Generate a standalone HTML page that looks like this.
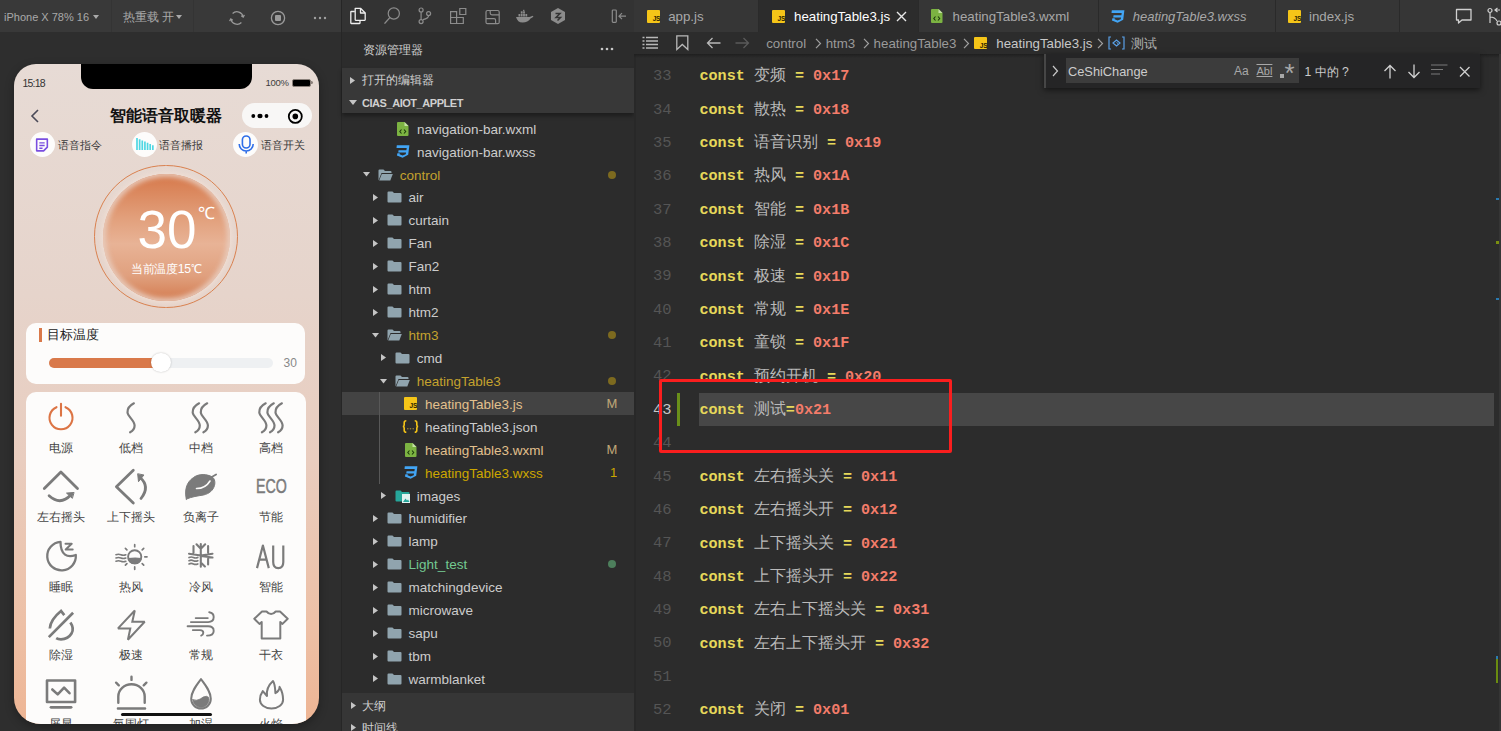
<!DOCTYPE html>
<html><head><meta charset="utf-8">
<style>
*{box-sizing:border-box;margin:0;padding:0}
html,body{width:1501px;height:731px;overflow:hidden;background:#2c2c2c;font-family:"Liberation Sans",sans-serif}
.a{position:absolute}
.t{position:absolute;white-space:nowrap;height:20px;line-height:20px}
svg{position:absolute;overflow:visible}
</style></head><body>
<!-- ===== LEFT SIMULATOR ===== -->
<div class="a" style="left:0;top:0;width:341px;height:731px;background:#2e2e2e"></div>
<div class="a" style="left:0;top:0;width:341px;height:32px;background:#393939"></div>
<div class="a" style="left:111px;top:0;width:1px;height:32px;background:#343434"></div>
<div class="a" style="left:193px;top:0;width:1px;height:32px;background:#343434"></div>
<div class="a" style="left:341px;top:0;width:1px;height:731px;background:#262626"></div>
<div class="t" style="left:4px;top:7px;font-size:11px;color:#a9a9a9">iPhone X 78% 16</div>
<svg style="left:93px;top:15px" width="6" height="4"><path d="M0 0h6l-3 4z" fill="#a9a9a9"/></svg>
<div class="t" style="left:123px;top:7px;font-size:11.5px;color:#a9a9a9">热重载 开</div>
<svg style="left:176px;top:15px" width="6" height="4"><path d="M0 0h6l-3 4z" fill="#a9a9a9"/></svg>
<svg style="left:228px;top:9px" width="18" height="18" viewBox="0 0 18 18"><path d="M4.6 4.4A6.4 6.4 0 0 1 15.2 7.8M13.4 13.6A6.4 6.4 0 0 1 2.8 10.2" fill="none" stroke="#9a9a9a" stroke-width="1.3"/><path d="M13.2 6.8l2 1.4l1.2-2.3M4.8 11.2l-2-1.4l-1.2 2.3" fill="none" stroke="#9a9a9a" stroke-width="1.2"/></svg>
<svg style="left:270px;top:10px" width="16" height="16" viewBox="0 0 16 16"><circle cx="8" cy="8" r="6.6" fill="none" stroke="#9a9a9a" stroke-width="1.3"/><rect x="5" y="5" width="6" height="6" rx="1" fill="#9a9a9a"/></svg>
<svg style="left:313px;top:16px" width="14" height="4"><circle cx="2" cy="2" r="1.2" fill="#a0a0a0"/><circle cx="7" cy="2" r="1.2" fill="#a0a0a0"/><circle cx="12" cy="2" r="1.2" fill="#a0a0a0"/></svg>

<!-- phone -->
<div class="a" style="left:13.5px;top:63.5px;width:305.5px;height:660.5px;border-radius:22px 22px 27px 27px / 22px 22px 26px 26px;overflow:hidden;box-shadow:0 3px 10px rgba(0,0,0,0.3);background:linear-gradient(180deg,#e7dbd5 0%,#e6d4cb 35%,#e9cdbf 60%,#edc0a6 85%,#eeb594 100%)">
  <div class="a" style="left:67.5px;top:-2px;width:171px;height:27.5px;background:#000;border-radius:0 0 12px 12px"></div>
  <div class="t" style="left:9px;top:9px;font-size:10.5px;letter-spacing:-0.8px;color:#333">15:18</div>
  <div class="t" style="left:252px;top:9px;font-size:9.5px;color:#3d3d3d;letter-spacing:-0.3px">100%</div>
  <div class="a" style="left:278.5px;top:15.3px;width:18.5px;height:8px;border:1.3px solid #8a807a;border-radius:2px;background:#000"></div>
  <div class="a" style="left:297.5px;top:17.6px;width:1.6px;height:3.2px;border-radius:0 2px 2px 0;background:#8a807a"></div>
  <!-- nav -->
  <svg style="left:16px;top:45px" width="10" height="14" viewBox="0 0 10 14"><path d="M8 1L2 7l6 6" fill="none" stroke="#4a4a58" stroke-width="1.6"/></svg>
  <div class="t" style="left:96px;top:41.5px;height:20px;line-height:20px;font-size:16.2px;font-weight:bold;color:#111">智能语音取暖器</div>
  <div class="a" style="left:228.8px;top:39.3px;width:69.8px;height:25px;border-radius:12.5px;background:#f8f7f6"></div>
  <svg style="left:236px;top:49px" width="20" height="6"><circle cx="3.3" cy="3" r="1.9" fill="#000"/><ellipse cx="10" cy="3" rx="2.6" ry="2.2" fill="#000"/><circle cx="16.5" cy="3" r="1.9" fill="#000"/></svg>
  <svg style="left:273px;top:44.5px" width="17" height="17"><circle cx="8.3" cy="8.4" r="6.5" fill="none" stroke="#000" stroke-width="1.8"/><circle cx="8.3" cy="8.4" r="2.8" fill="#000"/></svg>
  <!-- voice buttons -->
  <div class="a" style="left:16.3px;top:68.8px;width:25px;height:25px;border-radius:50%;background:#fdfcfb"></div>
  <svg style="left:20.5px;top:73px" width="16" height="16" viewBox="-0.5 -0.5 15 15"><path d="M2 1.5h10v7.5l-3.5 3.5H2z" fill="none" stroke="#7a4ee0" stroke-width="1.5" stroke-linejoin="round"/><path d="M4.5 5h5M4.5 7.5h5M4.5 10h3" stroke="#7a4ee0" stroke-width="1.3"/></svg>
  <div class="t" style="left:44px;top:71px;font-size:10.5px;color:#3a3a3a">语音指令</div>
  <div class="a" style="left:118px;top:68.8px;width:25px;height:25px;border-radius:50%;background:#fdfcfb"></div>
  <svg style="left:123px;top:74.5px" width="18" height="12" viewBox="0 0 15 10" preserveAspectRatio="none"><path d="M0 0v10M2.2 1v9M4.4 2v8M6.6 3v7M8.8 4v6M11 5v5M13.2 6v4" stroke="#4fd7e3" stroke-width="1.4"/></svg>
  <div class="t" style="left:145.5px;top:71px;font-size:10.5px;color:#3a3a3a">语音播报</div>
  <div class="a" style="left:219.5px;top:68.8px;width:25px;height:25px;border-radius:50%;background:#fdfcfb"></div>
  <svg style="left:224px;top:71px" width="17" height="20" viewBox="0 0 17 20"><rect x="4.4" y="1" width="7.6" height="12" rx="3.8" fill="none" stroke="#2f6ee8" stroke-width="1.6"/><path d="M1.2 9a7 7 0 0 0 14 0M8.2 16v2.5" fill="none" stroke="#2f6ee8" stroke-width="1.6"/></svg>
  <div class="t" style="left:247px;top:71px;font-size:10.5px;color:#3a3a3a">语音开关</div>
  <!-- temperature dial -->
  <div class="a" style="left:80.8px;top:101.3px;width:143.5px;height:143.5px;border-radius:50%;border:1.8px solid #d9814f"></div>
  <div class="a" style="left:89px;top:110px;width:127px;height:127px;border-radius:50%;background:linear-gradient(180deg,#d6784a 0%,#e2a07c 35%,#e8b396 55%,#e0a07e 80%,#d47c50 100%);box-shadow:0 0 5px 3px rgba(232,204,190,0.9) inset,0 0 4px 2px rgba(240,222,212,0.9)"></div>
  <div class="t" style="left:124px;top:136px;height:60px;line-height:60px;font-size:53px;color:#fff">30</div>
  <div class="t" style="left:184.5px;top:140.5px;font-size:17px;color:#fff">℃</div>
  <div class="t" style="left:117.5px;top:195.5px;font-size:12.2px;color:#fff;letter-spacing:-0.3px">当前温度15℃</div>
  <!-- target temp card -->
  <div class="a" style="left:12.8px;top:259.9px;width:279px;height:60.2px;border-radius:10px;background:#fdfcfb"></div>
  <div class="a" style="left:25px;top:264.3px;width:3.4px;height:14.2px;background:#d9794a"></div>
  <div class="t" style="left:33px;top:261px;font-size:13px;font-weight:500;color:#1a1a1a">目标温度</div>
  <div class="a" style="left:35.4px;top:294px;width:224px;height:10px;border-radius:5px;background:#eef0f2"></div>
  <div class="a" style="left:35.4px;top:294px;width:112px;height:10px;border-radius:5px;background:#d9794a"></div>
  <div class="a" style="left:137.5px;top:289.4px;width:19.5px;height:19.5px;border-radius:50%;background:#fff;box-shadow:0 0 2px rgba(0,0,0,0.25)"></div>
  <div class="t" style="left:270px;top:289px;font-size:12px;color:#888">30</div>
  <!-- grid card -->
  <div class="a" style="left:12.8px;top:328.5px;width:279.5px;height:360px;border-radius:10px;background:#fdfcfb"></div>
  <div class="t" style="left:35px;top:374.6px;font-size:11.5px;color:#444">电源</div>
  <div class="t" style="left:105px;top:374.6px;font-size:11.5px;color:#444">低档</div>
  <div class="t" style="left:175px;top:374.6px;font-size:11.5px;color:#444">中档</div>
  <div class="t" style="left:245px;top:374.6px;font-size:11.5px;color:#444">高档</div>
  <div class="t" style="left:23.5px;top:443.6px;font-size:11.5px;color:#444">左右摇头</div>
  <div class="t" style="left:93.5px;top:443.6px;font-size:11.5px;color:#444">上下摇头</div>
  <div class="t" style="left:169px;top:443.6px;font-size:11.5px;color:#444">负离子</div>
  <div class="t" style="left:245px;top:443.6px;font-size:11.5px;color:#444">节能</div>
  <div class="t" style="left:35px;top:513.6px;font-size:11.5px;color:#444">睡眠</div>
  <div class="t" style="left:105px;top:513.6px;font-size:11.5px;color:#444">热风</div>
  <div class="t" style="left:175px;top:513.6px;font-size:11.5px;color:#444">冷风</div>
  <div class="t" style="left:245px;top:513.6px;font-size:11.5px;color:#444">智能</div>
  <div class="t" style="left:35px;top:581.6px;font-size:11.5px;color:#444">除湿</div>
  <div class="t" style="left:105px;top:581.6px;font-size:11.5px;color:#444">极速</div>
  <div class="t" style="left:175px;top:581.6px;font-size:11.5px;color:#444">常规</div>
  <div class="t" style="left:245px;top:581.6px;font-size:11.5px;color:#444">干衣</div>
  <div class="t" style="left:35px;top:650.6px;font-size:11.5px;color:#444">屏显</div>
  <div class="t" style="left:99px;top:650.6px;font-size:11.5px;color:#444">氛围灯</div>
  <div class="t" style="left:175px;top:650.6px;font-size:11.5px;color:#444">加湿</div>
  <div class="t" style="left:245px;top:650.6px;font-size:11.5px;color:#444">火焰</div>
  <svg style="left:0;top:0" width="306" height="661" viewBox="13.5 63.5 306 661">
 <g fill="none" stroke="#7b7b7b" stroke-width="2.2" stroke-linecap="round" stroke-linejoin="round">
  <path d="M56 406.7A11.5 11.5 0 1 0 65 406.7M60.5 403.3V415.2" stroke="#dc7444" stroke-width="2.1"/>
  <path d="M133.4 402.8C128.2 405.5 126.8 409 127.0 412C127.3 416 134.1 420 134.1 425C134.1 428 132.1 430.5 129.6 431.8"/>
  <path d="M198.6 402.8C193.4 405.5 192.0 409 192.2 412C192.5 416 199.3 420 199.3 425C199.3 428 197.3 430.5 194.8 431.8M206.7 402.8C201.5 405.5 200.1 409 200.3 412C200.6 416 207.4 420 207.4 425C207.4 428 205.4 430.5 202.9 431.8"/>
  <path d="M265.2 402.8C260.0 405.5 258.6 409 258.8 412C259.1 416 265.9 420 265.9 425C265.9 428 263.9 430.5 261.4 431.8M273.3 402.8C268.1 405.5 266.7 409 266.9 412C267.2 416 274.0 420 274.0 425C274.0 428 272.0 430.5 269.5 431.8M281.4 402.8C276.2 405.5 274.8 409 275.0 412C275.3 416 282.1 420 282.1 425C282.1 428 280.1 430.5 277.6 431.8"/>
  <path d="M43.8 488L60.4 471.5L77 488" stroke-width="2.8"/>
  <path d="M48.6 495.3Q60 505.5 70.5 494.3" stroke-width="2.8"/>
  <path d="M73.2 492l-7.2 0.6l5.6 5z" fill="#7b7b7b" stroke-width="1"/>
  <path d="M132.8 469.8L115.9 486.2L132.8 502.6" stroke-width="2.8"/>
  <path d="M140.5 498Q150 486 139.5 477" stroke-width="2.8"/>
  <path d="M137.2 473.6l0.8 7.6l5.2-6.4z" fill="#7b7b7b" stroke-width="1"/>
  <path d="M185.8 498.6C184 490 185.5 482 193 477C197 474 203 473 210 475.5C214 477 215 481 214 485C212.5 490 209 493 203 494.5C197 495.5 192 496 185.8 498.6Z" fill="#7b7b7b" stroke-width="1"/>
  <path d="M209.5 477.5L215.6 474" stroke-width="1.8"/>
  <path d="M196 488Q205 488 209.5 480.5" stroke="#fdfcfb" stroke-width="1.6"/>
  <path d="M60 541.3A14.3 14.3 0 1 0 75.3 554.5C67 557.5 60 555 60 541.3Z" stroke-width="2.3"/>
  <path d="M65 543.2h6.2l-6 5.8h7" stroke-width="2"/>
  <circle cx="134.2" cy="556.3" r="6.6" stroke-width="1.9"/>
  <path d="M127.8 558.2Q134 557 140.6 558A6.6 6.6 0 0 1 127.8 558.2Z" fill="#7b7b7b" stroke-width="1.2"/>
  <path d="M134.2 544.2v2M134.2 566.4v2.4M144.3 556.3h2.2M124.9 547.8l1.5 1.5M143.2 547.8l-1.5 1.5M124.9 564.6l1.5-1.5M143.2 564.6l-1.5-1.5" stroke-width="1.7"/>
  <path d="M115.4 554.2q2.5-1 5 0t5 0M115.4 557.5q2.5-1 5 0t5 0M115.4 560.8q2.5-1 5 0t5 0" stroke-width="1.5"/>
  <path d="M200.3 543.5V566.2M196 543.8L200.3 548.3L204.7 543.8M200.3 555L212 553.2M207.6 545.5V552.3M200.3 555L188.5 553.2M193 545.5V552.3M200.3 555.5L212 557M207.6 558.3V564M200.3 562L204.4 566" stroke-width="2.1"/>
  <path d="M188.5 557q2.2-1 4.4 0t4.4 0M188.5 560.2q2.2-1 4.4 0t4.4 0M188.5 563.4q2.2-1 4.4 0t4.4 0" stroke-width="1.7"/>
  <path d="M256.5 567.6L262.4 545L268.3 567.6M258.7 559.2H266.2M272.7 545V561.5Q272.7 567.6 277.8 567.6Q282.8 567.6 282.8 561.5V545" stroke-width="2.2" stroke-linecap="butt"/>
  <path d="M48.3 636.6L72.6 612.3M49.3 628Q50 619 60.5 610.5L63.8 614.6M69.9 622Q74 628 71 633Q67.5 638.8 60.5 638.8Q57.5 638.8 55.7 637.6" stroke-width="2.7" stroke-linecap="butt" stroke-linejoin="miter"/>
  <path d="M134.3 610L117.5 627.9H129.8L127.4 639.2L144.2 621.3H131.8Z" stroke-width="2" stroke-linejoin="miter" stroke-miterlimit="2.5"/>
  <path d="M195.2 617.6H207.3M190.4 621.6H207.6Q213.2 621.6 213.2 616.6Q213.2 612.3 208.7 611.7M187.1 625.8H207.6Q213.2 625.8 213.2 630.4Q213.2 635 206.5 635.1M192.3 629.6H199.6Q202.8 629.6 202.8 632.3Q202.8 634.3 200.7 635.1" stroke-width="1.9"/>
  <path d="M261.5 611H266Q270.6 616.2 275.2 611H279.5L287.2 618.3L282 623.4L279.8 621.5V638H261.2V621.5L258.9 623.4L253.8 618.3Z" stroke-width="2"/>
  <path d="M46.5 680H74.6V701.5H46.5Z" stroke-width="2.6"/>
  <path d="M51.8 689L57.2 693.9L63.6 687.2L69 692.7" stroke-width="2.6"/>
  <path d="M50.5 706.8H70.6" stroke-width="2.8"/>
  <path d="M117.8 702.3V696A13.2 12.2 0 0 1 144.2 696V702.3M117.4 708H144.6M131 676.2V679.4M115.6 682.2l2.7 2.6M145.9 682.2l-2.7 2.6" stroke-width="2.4"/>
  <path d="M200.5 678.6C196 684.5 190.7 691 190.7 698.3A9.8 9.8 0 0 0 210.3 698.3C210.3 691 205 684.5 200.5 678.6Z" stroke-width="2"/>
  <path d="M192.4 699.2Q196 700.6 199.6 698.6Q203 695.6 206 695.8Q208.6 696.2 208.5 698.6A8 8 0 0 1 192.4 699.2Z" fill="#7b7b7b" stroke-width="0.8"/>
  <path d="M272.5 680.5C267.5 685 265.8 690 266.5 695.5L262.3 690.6C259.8 694 259.4 697 259.4 699.2A11.6 8.8 0 0 0 282.6 699.2C282.6 694 281 689.5 279.1 686.4C279 689.5 277 691.5 274.9 692.6C274.6 688 274.6 683.5 272.5 680.5Z" stroke-width="2"/>
 </g>
 <text x="271" y="492.8" font-family="Liberation Sans" font-size="19.8" fill="#7b7b7b" stroke="#7b7b7b" stroke-width="0.5" text-anchor="middle" transform="translate(271 0) scale(0.72 1) translate(-271 0)">ECO</text>
</svg>

  <div class="a" style="left:107.5px;top:649px;width:91px;height:3.6px;border-radius:2px;background:#111"></div>
</div>
<!-- ===== EXPLORER ===== -->
<div class="a" style="left:342px;top:0;width:292px;height:32px;background:#333333"></div>
<div class="a" style="left:342px;top:32px;width:292px;height:699px;background:#2c2c2c"></div>
<svg style="left:342px;top:0" width="292" height="32" viewBox="342 0 292 32">
 <g fill="none" stroke="#eeeeee" stroke-width="1.3" stroke-linejoin="round">
  <path d="M354.8 11.5H351.2Q350.8 11.5 350.8 12V23Q350.8 23.5 351.2 23.5H359.5Q360 23.5 360 23V20.5"/>
  <path d="M355.2 8.3H360.5L365.2 13V19.8Q365.2 20.3 364.7 20.3H355.7Q355.2 20.3 355.2 19.8Z"/>
  <path d="M360.5 8.3V13H365.2"/>
 </g>
 <g fill="none" stroke="#8c8c8c" stroke-width="1.2">
  <circle cx="393.8" cy="13.5" r="5.6"/>
  <path d="M389.8 17.6L384.5 23.6" stroke-width="1.4"/>
  <circle cx="421.1" cy="10" r="2"/><circle cx="421.1" cy="21.6" r="2"/><circle cx="428.6" cy="13.6" r="2"/>
  <path d="M421.1 12V19.6M428.6 15.6Q428.6 18.6 423 19.6"/>
  <path d="M450.6 11.6H456.6V23.5H450.6ZM450.6 17.5H463.3V23.5H456.6M459.8 8.5H465.8V14.5H459.8Z"/>
  <path d="M487.5 10.5H497.7Q499.2 10.5 499.2 12V22.2Q499.2 23.7 497.7 23.7H487.5Q486 23.7 486 22.2V12Q486 10.5 487.5 10.5ZM490.2 10.5V13Q490.2 14.8 492 14.8H499.2M486 18.6H494Q495.6 18.6 495.6 20.2V23.7" />
 </g>
 <g fill="#8c8c8c">
  <path d="M516 17H529.5Q531 16.5 532.5 15.8L533.5 16.5Q532 18 530.5 18.5Q528 22.5 522.5 22.5Q517.5 22.5 516 17Z"/>
  <rect x="518.5" y="14" width="1.8" height="2.5"/><rect x="520.8" y="14" width="1.8" height="2.5"/><rect x="523.1" y="14" width="1.8" height="2.5"/><rect x="520.8" y="11.3" width="1.8" height="2.3"/><rect x="523.1" y="11.3" width="1.8" height="2.3"/><rect x="525.4" y="14" width="1.8" height="2.5"/><rect x="523.1" y="9.8" width="1.3" height="1.3"/>
  <path d="M558 8L565 12V20L558 24L551 20V12Z"/>
 </g>
 <path d="M555.5 13.5H560L556 17.5H560.5L557.5 20.5" fill="none" stroke="#333333" stroke-width="1.5"/>
 <g fill="none" stroke="#8c8c8c" stroke-width="1.2">
  <rect x="612.3" y="10" width="4" height="12.4" rx="0.8"/>
  <path d="M626 16.2H619M622 13.2L619 16.2L622 19.2"/>
 </g>
</svg>

<div class="t" style="left:362.5px;top:39.5px;font-size:11.8px;color:#cfcfcf">资源管理器</div>
<svg style="left:600px;top:47px" width="14" height="4"><circle cx="2" cy="2" r="1.3" fill="#c8c8c8"/><circle cx="7" cy="2" r="1.3" fill="#c8c8c8"/><circle cx="12" cy="2" r="1.3" fill="#c8c8c8"/></svg>
<div class="t" style="left:417px;top:119.6px;font-size:13.5px;color:#cccccc">navigation-bar.wxml</div>
<svg style="left:396.5px;top:121.6px" width="12" height="14"><path d="M0 1Q0 0 1 0H7.5L11.5 4V13Q11.5 14 10.5 14H1Q0 14 0 13Z" fill="#7cb342"/><path d="M7.5 0V4H11.5Z" fill="#c5e1a5"/><path d="M4.5 7.5L2.8 9.5L4.5 11.5M7 7.5L8.7 9.5L7 11.5" fill="none" stroke="#1b3a0a" stroke-width="1.1"/></svg>
<div class="t" style="left:417px;top:142.5px;font-size:13.5px;color:#cccccc">navigation-bar.wxss</div>
<svg style="left:395.8px;top:144.7px" width="14" height="13"><path d="M0.8 0.3H13.4L12.2 9.8L6.6 12.8L0.9 10.6L1.4 8.2H3.8L3.6 9.2L6.6 10.4L9.7 9.2L10.1 7.4H2.2L2.6 5.2H10.4L10.7 3H0.5Z" fill="#42a5f5"/></svg>
<div class="t" style="left:399.7px;top:165.5px;font-size:13.5px;color:#c4a22e">control</div>
<svg style="left:362.7px;top:172.2px" width="7" height="4.6"><path d="M0 0H7L3.5 4.6Z" fill="#c5c5c5"/></svg>
<svg style="left:377.7px;top:168.5px" width="15" height="12"><path d="M0.5 1.5Q0.5 0.5 1.5 0.5H5.5L7 2H12.5Q13.5 2 13.5 3V4H3.5L0.5 11.5Z" fill="#90a4ae"/><path d="M3.8 5H14.8L12.3 11.5H1.2Z" fill="#90a4ae"/></svg>
<div class="a" style="left:608.3px;top:170.5px;width:8px;height:8px;border-radius:50%;background:#7d6a1f"></div>
<div class="t" style="left:408.6px;top:188.4px;font-size:13.5px;color:#cccccc">air</div>
<svg style="left:372.6px;top:193.9px" width="5" height="7"><path d="M0 0L5 3.5L0 7Z" fill="#c5c5c5"/></svg>
<svg style="left:386.6px;top:191.4px" width="15" height="12"><path d="M0.5 1.5Q0.5 0.5 1.5 0.5H5.5L7 2H13.5Q14.5 2 14.5 3V10.5Q14.5 11.5 13.5 11.5H1.5Q0.5 11.5 0.5 10.5Z" fill="#90a4ae"/></svg>
<div class="t" style="left:408.6px;top:211.3px;font-size:13.5px;color:#cccccc">curtain</div>
<svg style="left:372.6px;top:216.8px" width="5" height="7"><path d="M0 0L5 3.5L0 7Z" fill="#c5c5c5"/></svg>
<svg style="left:386.6px;top:214.3px" width="15" height="12"><path d="M0.5 1.5Q0.5 0.5 1.5 0.5H5.5L7 2H13.5Q14.5 2 14.5 3V10.5Q14.5 11.5 13.5 11.5H1.5Q0.5 11.5 0.5 10.5Z" fill="#90a4ae"/></svg>
<div class="t" style="left:408.6px;top:234.2px;font-size:13.5px;color:#cccccc">Fan</div>
<svg style="left:372.6px;top:239.8px" width="5" height="7"><path d="M0 0L5 3.5L0 7Z" fill="#c5c5c5"/></svg>
<svg style="left:386.6px;top:237.2px" width="15" height="12"><path d="M0.5 1.5Q0.5 0.5 1.5 0.5H5.5L7 2H13.5Q14.5 2 14.5 3V10.5Q14.5 11.5 13.5 11.5H1.5Q0.5 11.5 0.5 10.5Z" fill="#90a4ae"/></svg>
<div class="t" style="left:408.6px;top:257.2px;font-size:13.5px;color:#cccccc">Fan2</div>
<svg style="left:372.6px;top:262.7px" width="5" height="7"><path d="M0 0L5 3.5L0 7Z" fill="#c5c5c5"/></svg>
<svg style="left:386.6px;top:260.2px" width="15" height="12"><path d="M0.5 1.5Q0.5 0.5 1.5 0.5H5.5L7 2H13.5Q14.5 2 14.5 3V10.5Q14.5 11.5 13.5 11.5H1.5Q0.5 11.5 0.5 10.5Z" fill="#90a4ae"/></svg>
<div class="t" style="left:408.6px;top:280.1px;font-size:13.5px;color:#cccccc">htm</div>
<svg style="left:372.6px;top:285.6px" width="5" height="7"><path d="M0 0L5 3.5L0 7Z" fill="#c5c5c5"/></svg>
<svg style="left:386.6px;top:283.1px" width="15" height="12"><path d="M0.5 1.5Q0.5 0.5 1.5 0.5H5.5L7 2H13.5Q14.5 2 14.5 3V10.5Q14.5 11.5 13.5 11.5H1.5Q0.5 11.5 0.5 10.5Z" fill="#90a4ae"/></svg>
<div class="t" style="left:408.6px;top:303.0px;font-size:13.5px;color:#cccccc">htm2</div>
<svg style="left:372.6px;top:308.5px" width="5" height="7"><path d="M0 0L5 3.5L0 7Z" fill="#c5c5c5"/></svg>
<svg style="left:386.6px;top:306.0px" width="15" height="12"><path d="M0.5 1.5Q0.5 0.5 1.5 0.5H5.5L7 2H13.5Q14.5 2 14.5 3V10.5Q14.5 11.5 13.5 11.5H1.5Q0.5 11.5 0.5 10.5Z" fill="#90a4ae"/></svg>
<div class="t" style="left:408.6px;top:326.0px;font-size:13.5px;color:#c4a22e">htm3</div>
<svg style="left:371.6px;top:332.7px" width="7" height="4.6"><path d="M0 0H7L3.5 4.6Z" fill="#c5c5c5"/></svg>
<svg style="left:386.6px;top:329.0px" width="15" height="12"><path d="M0.5 1.5Q0.5 0.5 1.5 0.5H5.5L7 2H12.5Q13.5 2 13.5 3V4H3.5L0.5 11.5Z" fill="#90a4ae"/><path d="M3.8 5H14.8L12.3 11.5H1.2Z" fill="#90a4ae"/></svg>
<div class="a" style="left:608.3px;top:331.0px;width:8px;height:8px;border-radius:50%;background:#7d6a1f"></div>
<div class="t" style="left:416.8px;top:348.9px;font-size:13.5px;color:#cccccc">cmd</div>
<svg style="left:380.8px;top:354.4px" width="5" height="7"><path d="M0 0L5 3.5L0 7Z" fill="#c5c5c5"/></svg>
<svg style="left:394.8px;top:351.9px" width="15" height="12"><path d="M0.5 1.5Q0.5 0.5 1.5 0.5H5.5L7 2H13.5Q14.5 2 14.5 3V10.5Q14.5 11.5 13.5 11.5H1.5Q0.5 11.5 0.5 10.5Z" fill="#90a4ae"/></svg>
<div class="t" style="left:416.8px;top:371.8px;font-size:13.5px;color:#c4a22e">heatingTable3</div>
<svg style="left:379.8px;top:378.5px" width="7" height="4.6"><path d="M0 0H7L3.5 4.6Z" fill="#c5c5c5"/></svg>
<svg style="left:394.8px;top:374.8px" width="15" height="12"><path d="M0.5 1.5Q0.5 0.5 1.5 0.5H5.5L7 2H12.5Q13.5 2 13.5 3V4H3.5L0.5 11.5Z" fill="#90a4ae"/><path d="M3.8 5H14.8L12.3 11.5H1.2Z" fill="#90a4ae"/></svg>
<div class="a" style="left:608.3px;top:376.8px;width:8px;height:8px;border-radius:50%;background:#7d6a1f"></div>
<div class="a" style="left:342px;top:392.4px;width:292px;height:22.8px;background:#434343"></div>
<div class="t" style="left:425px;top:394.8px;font-size:13.5px;color:#e2c08d">heatingTable3.js</div>
<div class="a" style="left:404.0px;top:397.3px;width:13px;height:13px;background:#f5c518;border-radius:1px"></div>
<div class="t" style="left:409.5px;top:401.3px;height:10px;line-height:10px;font-size:6.5px;font-weight:bold;color:#2a2200;letter-spacing:-0.2px">JS</div>
<div class="t" style="left:606.5px;top:393.8px;font-size:13px;color:#c0a878">M</div>
<div class="t" style="left:425px;top:417.7px;font-size:13.5px;color:#cccccc">heatingTable3.json</div>
<svg style="left:402.2px;top:420.2px" width="17" height="13"><path d="M4.3 0.8Q2.2 0.8 2.2 2.8V5Q2.2 6.5 0.8 6.5Q2.2 6.5 2.2 8V10.2Q2.2 12.2 4.3 12.2M12.7 0.8Q14.8 0.8 14.8 2.8V5Q14.8 6.5 16.2 6.5Q14.8 6.5 14.8 8V10.2Q14.8 12.2 12.7 12.2" fill="none" stroke="#f5c518" stroke-width="1.6"/><circle cx="5.8" cy="8.8" r="0.8" fill="#a08830"/><circle cx="8.5" cy="8.8" r="0.8" fill="#a08830"/><circle cx="11.2" cy="8.8" r="0.8" fill="#a08830"/></svg>
<div class="t" style="left:425px;top:440.6px;font-size:13.5px;color:#e2c08d">heatingTable3.wxml</div>
<svg style="left:404.5px;top:442.6px" width="12" height="14"><path d="M0 1Q0 0 1 0H7.5L11.5 4V13Q11.5 14 10.5 14H1Q0 14 0 13Z" fill="#7cb342"/><path d="M7.5 0V4H11.5Z" fill="#c5e1a5"/><path d="M4.5 7.5L2.8 9.5L4.5 11.5M7 7.5L8.7 9.5L7 11.5" fill="none" stroke="#1b3a0a" stroke-width="1.1"/></svg>
<div class="t" style="left:606.5px;top:439.6px;font-size:13px;color:#c0a878">M</div>
<div class="t" style="left:425px;top:463.5px;font-size:13.5px;color:#cca700">heatingTable3.wxss</div>
<svg style="left:403.8px;top:465.7px" width="14" height="13"><path d="M0.8 0.3H13.4L12.2 9.8L6.6 12.8L0.9 10.6L1.4 8.2H3.8L3.6 9.2L6.6 10.4L9.7 9.2L10.1 7.4H2.2L2.6 5.2H10.4L10.7 3H0.5Z" fill="#42a5f5"/></svg>
<div class="t" style="left:610px;top:462.5px;font-size:13px;color:#cca700">1</div>
<div class="t" style="left:416.8px;top:486.5px;font-size:13.5px;color:#cccccc">images</div>
<svg style="left:380.8px;top:492.0px" width="5" height="7"><path d="M0 0L5 3.5L0 7Z" fill="#c5c5c5"/></svg>
<svg style="left:394.8px;top:489.5px" width="16" height="13"><path d="M0.5 1.5Q0.5 0.5 1.5 0.5H5.5L7 2H13.5Q14.5 2 14.5 3V10.5Q14.5 11.5 13.5 11.5H1.5Q0.5 11.5 0.5 10.5Z" fill="#26a69a"/><rect x="7" y="4" width="8" height="9" fill="#e0f2f1"/><path d="M8 12L10.5 8.5L12 10.5L13 9.5L14.5 12Z" fill="#26a69a"/></svg>
<div class="t" style="left:408.6px;top:509.4px;font-size:13.5px;color:#cccccc">humidifier</div>
<svg style="left:372.6px;top:514.9px" width="5" height="7"><path d="M0 0L5 3.5L0 7Z" fill="#c5c5c5"/></svg>
<svg style="left:386.6px;top:512.4px" width="15" height="12"><path d="M0.5 1.5Q0.5 0.5 1.5 0.5H5.5L7 2H13.5Q14.5 2 14.5 3V10.5Q14.5 11.5 13.5 11.5H1.5Q0.5 11.5 0.5 10.5Z" fill="#90a4ae"/></svg>
<div class="t" style="left:408.6px;top:532.3px;font-size:13.5px;color:#cccccc">lamp</div>
<svg style="left:372.6px;top:537.8px" width="5" height="7"><path d="M0 0L5 3.5L0 7Z" fill="#c5c5c5"/></svg>
<svg style="left:386.6px;top:535.3px" width="15" height="12"><path d="M0.5 1.5Q0.5 0.5 1.5 0.5H5.5L7 2H13.5Q14.5 2 14.5 3V10.5Q14.5 11.5 13.5 11.5H1.5Q0.5 11.5 0.5 10.5Z" fill="#90a4ae"/></svg>
<div class="t" style="left:408.6px;top:555.3px;font-size:13.5px;color:#73c991">Light_test</div>
<svg style="left:372.6px;top:560.8px" width="5" height="7"><path d="M0 0L5 3.5L0 7Z" fill="#c5c5c5"/></svg>
<svg style="left:386.6px;top:558.3px" width="15" height="12"><path d="M0.5 1.5Q0.5 0.5 1.5 0.5H5.5L7 2H13.5Q14.5 2 14.5 3V10.5Q14.5 11.5 13.5 11.5H1.5Q0.5 11.5 0.5 10.5Z" fill="#90a4ae"/></svg>
<div class="a" style="left:608.3px;top:560.3px;width:8px;height:8px;border-radius:50%;background:#4d7f5c"></div>
<div class="t" style="left:408.6px;top:578.2px;font-size:13.5px;color:#cccccc">matchingdevice</div>
<svg style="left:372.6px;top:583.7px" width="5" height="7"><path d="M0 0L5 3.5L0 7Z" fill="#c5c5c5"/></svg>
<svg style="left:386.6px;top:581.2px" width="15" height="12"><path d="M0.5 1.5Q0.5 0.5 1.5 0.5H5.5L7 2H13.5Q14.5 2 14.5 3V10.5Q14.5 11.5 13.5 11.5H1.5Q0.5 11.5 0.5 10.5Z" fill="#90a4ae"/></svg>
<div class="t" style="left:408.6px;top:601.1px;font-size:13.5px;color:#cccccc">microwave</div>
<svg style="left:372.6px;top:606.6px" width="5" height="7"><path d="M0 0L5 3.5L0 7Z" fill="#c5c5c5"/></svg>
<svg style="left:386.6px;top:604.1px" width="15" height="12"><path d="M0.5 1.5Q0.5 0.5 1.5 0.5H5.5L7 2H13.5Q14.5 2 14.5 3V10.5Q14.5 11.5 13.5 11.5H1.5Q0.5 11.5 0.5 10.5Z" fill="#90a4ae"/></svg>
<div class="t" style="left:408.6px;top:624.1px;font-size:13.5px;color:#cccccc">sapu</div>
<svg style="left:372.6px;top:629.6px" width="5" height="7"><path d="M0 0L5 3.5L0 7Z" fill="#c5c5c5"/></svg>
<svg style="left:386.6px;top:627.1px" width="15" height="12"><path d="M0.5 1.5Q0.5 0.5 1.5 0.5H5.5L7 2H13.5Q14.5 2 14.5 3V10.5Q14.5 11.5 13.5 11.5H1.5Q0.5 11.5 0.5 10.5Z" fill="#90a4ae"/></svg>
<div class="t" style="left:408.6px;top:647.0px;font-size:13.5px;color:#cccccc">tbm</div>
<svg style="left:372.6px;top:652.5px" width="5" height="7"><path d="M0 0L5 3.5L0 7Z" fill="#c5c5c5"/></svg>
<svg style="left:386.6px;top:650.0px" width="15" height="12"><path d="M0.5 1.5Q0.5 0.5 1.5 0.5H5.5L7 2H13.5Q14.5 2 14.5 3V10.5Q14.5 11.5 13.5 11.5H1.5Q0.5 11.5 0.5 10.5Z" fill="#90a4ae"/></svg>
<div class="t" style="left:408.6px;top:669.9px;font-size:13.5px;color:#cccccc">warmblanket</div>
<svg style="left:372.6px;top:675.4px" width="5" height="7"><path d="M0 0L5 3.5L0 7Z" fill="#c5c5c5"/></svg>
<svg style="left:386.6px;top:672.9px" width="15" height="12"><path d="M0.5 1.5Q0.5 0.5 1.5 0.5H5.5L7 2H13.5Q14.5 2 14.5 3V10.5Q14.5 11.5 13.5 11.5H1.5Q0.5 11.5 0.5 10.5Z" fill="#90a4ae"/></svg>
<div class="a" style="left:378.5px;top:392px;width:1px;height:92px;background:#585858"></div>
<div class="a" style="left:342px;top:68px;width:292px;height:45px;background:#383838;box-shadow:0 3px 4px rgba(0,0,0,0.35)"></div>
<svg style="left:350px;top:76.5px" width="5" height="7"><path d="M0 0L5 3.5L0 7Z" fill="#c5c5c5"/></svg>
<div class="t" style="left:362px;top:70px;font-size:12px;color:#d0d0d0">打开的编辑器</div>
<svg style="left:348.5px;top:100px" width="8" height="5"><path d="M0 0H8L4 5Z" fill="#c5c5c5"/></svg>
<div class="t" style="left:362px;top:92.5px;font-size:11px;letter-spacing:-0.45px;font-weight:bold;color:#d0d0d0">CIAS_AIOT_APPLET</div>
<div class="a" style="left:342px;top:693px;width:292px;height:38px;background:#363636"></div>
<svg style="left:350.5px;top:701.5px" width="5" height="7"><path d="M0 0L5 3.5L0 7Z" fill="#c5c5c5"/></svg>
<div class="t" style="left:362px;top:695.5px;font-size:12px;color:#d0d0d0">大纲</div>
<svg style="left:350.5px;top:724px" width="5" height="7"><path d="M0 0L5 3.5L0 7Z" fill="#c5c5c5"/></svg>
<div class="t" style="left:362px;top:717.5px;font-size:12px;color:#d0d0d0">时间线</div>
<!-- ===== EDITOR ===== -->
<div class="a" style="left:634px;top:0;width:867px;height:32px;background:#363636"></div>
<div class="a" style="left:634px;top:32px;width:867px;height:699px;background:#2c2c2c"></div>
<div class="a" style="left:634px;top:0;width:125.3px;height:32px;background:#363636;border-right:1px solid #2a2a2a"></div>
<div class="t" style="left:668.2px;top:7px;font-size:13.3px;color:#a8a8a8">app.js</div>
<div class="a" style="left:647.2px;top:9.5px;width:13.3px;height:13.3px;background:#f5c518;border-radius:1px"></div>
<div class="t" style="left:652.7px;top:13.5px;height:10px;line-height:10px;font-size:6.5px;font-weight:bold;color:#2a2200;letter-spacing:-0.2px">JS</div>
<div class="a" style="left:759.3px;top:0;width:159.4px;height:32px;background:#2c2c2c;border-right:1px solid #2a2a2a"></div>
<div class="t" style="left:794px;top:7px;font-size:13.3px;color:#ffffff">heatingTable3.js</div>
<div class="a" style="left:772px;top:9.5px;width:13.3px;height:13.3px;background:#f5c518;border-radius:1px"></div>
<div class="t" style="left:777.5px;top:13.5px;height:10px;line-height:10px;font-size:6.5px;font-weight:bold;color:#2a2200;letter-spacing:-0.2px">JS</div>
<svg style="left:896px;top:11px" width="11" height="11"><path d="M1 1L10 10M10 1L1 10" stroke="#e8e8e8" stroke-width="1.4"/></svg>
<div class="a" style="left:918.7px;top:0;width:180.3px;height:32px;background:#363636;border-right:1px solid #2a2a2a"></div>
<div class="t" style="left:952.5px;top:7px;font-size:13.3px;color:#a8a8a8">heatingTable3.wxml</div>
<svg style="left:931.1px;top:9px" width="12" height="14"><path d="M0 1Q0 0 1 0H7.5L11.5 4V13Q11.5 14 10.5 14H1Q0 14 0 13Z" fill="#7cb342"/><path d="M7.5 0V4H11.5Z" fill="#c5e1a5"/><path d="M4.5 7.5L2.8 9.5L4.5 11.5M7 7.5L8.7 9.5L7 11.5" fill="none" stroke="#1b3a0a" stroke-width="1.1"/></svg>
<div class="a" style="left:1099px;top:0;width:176.6px;height:32px;background:#363636;border-right:1px solid #2a2a2a"></div>
<div class="t" style="left:1132.7px;top:7px;font-size:13px;font-style:italic;color:#a8a8a8">heatingTable3.wxss</div>
<svg style="left:1110.6px;top:9.5px" width="14" height="13"><path d="M0.8 0.3H13.4L12.2 9.8L6.6 12.8L0.9 10.6L1.4 8.2H3.8L3.6 9.2L6.6 10.4L9.7 9.2L10.1 7.4H2.2L2.6 5.2H10.4L10.7 3H0.5Z" fill="#42a5f5"/></svg>
<div class="a" style="left:1275.6px;top:0;width:124.4px;height:32px;background:#363636;border-right:1px solid #2a2a2a"></div>
<div class="t" style="left:1309px;top:7px;font-size:13.3px;color:#a8a8a8">index.js</div>
<div class="a" style="left:1288px;top:9.5px;width:13.3px;height:13.3px;background:#f5c518;border-radius:1px"></div>
<div class="t" style="left:1293.5px;top:13.5px;height:10px;line-height:10px;font-size:6.5px;font-weight:bold;color:#2a2200;letter-spacing:-0.2px">JS</div>
<svg style="left:1455px;top:8px" width="18" height="18"><path d="M1.5 1.5H16V12H7L3.5 15V12H1.5Z" fill="none" stroke="#d0d0d0" stroke-width="1.3" stroke-linejoin="round"/></svg>
<svg style="left:1486px;top:7px" width="16" height="20"><circle cx="4" cy="3.5" r="2" fill="none" stroke="#d0d0d0" stroke-width="1.2"/><path d="M4 5.5V16M4 10Q9 10 11 14M9 3H14M11.5 1L9 3L11.5 5" fill="none" stroke="#d0d0d0" stroke-width="1.2"/><circle cx="13" cy="16" r="2" fill="none" stroke="#d0d0d0" stroke-width="1.2"/></svg>
<div class="a" style="left:634px;top:54px;width:1.5px;height:677px;background:#282828"></div>
<div class="a" style="left:634px;top:54px;width:867px;height:4px;background:linear-gradient(#1f1f1f,rgba(44,44,44,0))"></div>
<svg style="left:642px;top:36px" width="17" height="14"><path d="M0.5 1.5H2.5M0.5 5H2.5M0.5 8.5H2.5M0.5 12H2.5M4 1.5H16M4 5H16M4 8.5H16M4 12H16" stroke="#b8b8b8" stroke-width="1.3"/></svg>
<svg style="left:676px;top:35px" width="13" height="16"><path d="M0.8 0.8H11.8V14.5L6.3 9.5L0.8 14.5Z" fill="none" stroke="#b8b8b8" stroke-width="1.3"/></svg>
<svg style="left:706px;top:37px" width="15" height="12"><path d="M14.5 6H1.5M6.5 1L1.5 6L6.5 11" fill="none" stroke="#b8b8b8" stroke-width="1.3"/></svg>
<svg style="left:735px;top:37px" width="15" height="12"><path d="M0.5 6H13.5M8.5 1L13.5 6L8.5 11" fill="none" stroke="#5a5a5a" stroke-width="1.3"/></svg>
<div class="t" style="left:766.2px;top:34px;font-size:13.3px;color:#9a9a9a">control</div>
<div class="t" style="left:825.7px;top:34px;font-size:13.3px;color:#9a9a9a">htm3</div>
<div class="t" style="left:873.6px;top:34px;font-size:13.3px;color:#9a9a9a">heatingTable3</div>
<div class="t" style="left:996.3px;top:34px;font-size:13.3px;color:#c8c8c8">heatingTable3.js</div>
<div class="t" style="left:1130.6px;top:34px;font-size:13.3px;color:#b0b0b0">测试</div>
<svg style="left:814.5px;top:38px" width="7" height="11"><path d="M1 0.8L5.5 5.5L1 10.2" fill="none" stroke="#a0a0a0" stroke-width="1.2"/></svg>
<svg style="left:862.8px;top:38px" width="7" height="11"><path d="M1 0.8L5.5 5.5L1 10.2" fill="none" stroke="#a0a0a0" stroke-width="1.2"/></svg>
<svg style="left:963.2px;top:38px" width="7" height="11"><path d="M1 0.8L5.5 5.5L1 10.2" fill="none" stroke="#a0a0a0" stroke-width="1.2"/></svg>
<svg style="left:1096.6px;top:38px" width="7" height="11"><path d="M1 0.8L5.5 5.5L1 10.2" fill="none" stroke="#a0a0a0" stroke-width="1.2"/></svg>
<div class="a" style="left:974.4px;top:36.5px;width:12.8px;height:12.8px;background:#f5c518;border-radius:1px"></div>
<div class="t" style="left:979.8px;top:40.5px;height:10px;line-height:10px;font-size:6.5px;font-weight:bold;color:#2a2200;letter-spacing:-0.2px">JS</div>
<svg style="left:1108px;top:36px" width="17" height="14"><path d="M3 1H1V13H3M14 1H16V13H14" fill="none" stroke="#5aa0e6" stroke-width="1.2"/><path d="M5 7L8.5 4L12 7L8.5 10Z" fill="none" stroke="#5aa0e6" stroke-width="1.2"/><path d="M8.5 6.5L10 7.5" stroke="#5aa0e6" stroke-width="1"/></svg>
<div class="a" style="left:699px;top:393.0px;width:795px;height:33px;background:#474747"></div>
<div class="a" style="left:677px;top:393.0px;width:2.5px;height:33px;background:#6a8f1a"></div>
<div class="t" style="left:640.5px;width:31px;text-align:right;top:66.1px;font-family:'Liberation Mono',monospace;font-size:15.5px;color:#555555">33</div>
<div class="t" style="left:699.5px;top:64.3px;font-family:'Liberation Mono',monospace;font-size:15.1px;color:#e6d85a"><span style="font-weight:bold">const</span> <span style="color:#bababa;font-family:'Liberation Sans',sans-serif;font-size:16.45px">变频</span><span style="color:#e6d85a;font-weight:bold"> = </span><span style="color:#f47c6a;font-weight:bold">0x17</span></div>
<div class="t" style="left:640.5px;width:31px;text-align:right;top:99.5px;font-family:'Liberation Mono',monospace;font-size:15.5px;color:#555555">34</div>
<div class="t" style="left:699.5px;top:97.7px;font-family:'Liberation Mono',monospace;font-size:15.1px;color:#e6d85a"><span style="font-weight:bold">const</span> <span style="color:#bababa;font-family:'Liberation Sans',sans-serif;font-size:16.45px">散热</span><span style="color:#e6d85a;font-weight:bold"> = </span><span style="color:#f47c6a;font-weight:bold">0x18</span></div>
<div class="t" style="left:640.5px;width:31px;text-align:right;top:132.8px;font-family:'Liberation Mono',monospace;font-size:15.5px;color:#555555">35</div>
<div class="t" style="left:699.5px;top:131.0px;font-family:'Liberation Mono',monospace;font-size:15.1px;color:#e6d85a"><span style="font-weight:bold">const</span> <span style="color:#bababa;font-family:'Liberation Sans',sans-serif;font-size:16.45px">语音识别</span><span style="color:#e6d85a;font-weight:bold"> = </span><span style="color:#f47c6a;font-weight:bold">0x19</span></div>
<div class="t" style="left:640.5px;width:31px;text-align:right;top:166.2px;font-family:'Liberation Mono',monospace;font-size:15.5px;color:#555555">36</div>
<div class="t" style="left:699.5px;top:164.4px;font-family:'Liberation Mono',monospace;font-size:15.1px;color:#e6d85a"><span style="font-weight:bold">const</span> <span style="color:#bababa;font-family:'Liberation Sans',sans-serif;font-size:16.45px">热风</span><span style="color:#e6d85a;font-weight:bold"> = </span><span style="color:#f47c6a;font-weight:bold">0x1A</span></div>
<div class="t" style="left:640.5px;width:31px;text-align:right;top:199.6px;font-family:'Liberation Mono',monospace;font-size:15.5px;color:#555555">37</div>
<div class="t" style="left:699.5px;top:197.8px;font-family:'Liberation Mono',monospace;font-size:15.1px;color:#e6d85a"><span style="font-weight:bold">const</span> <span style="color:#bababa;font-family:'Liberation Sans',sans-serif;font-size:16.45px">智能</span><span style="color:#e6d85a;font-weight:bold"> = </span><span style="color:#f47c6a;font-weight:bold">0x1B</span></div>
<div class="t" style="left:640.5px;width:31px;text-align:right;top:232.9px;font-family:'Liberation Mono',monospace;font-size:15.5px;color:#555555">38</div>
<div class="t" style="left:699.5px;top:231.1px;font-family:'Liberation Mono',monospace;font-size:15.1px;color:#e6d85a"><span style="font-weight:bold">const</span> <span style="color:#bababa;font-family:'Liberation Sans',sans-serif;font-size:16.45px">除湿</span><span style="color:#e6d85a;font-weight:bold"> = </span><span style="color:#f47c6a;font-weight:bold">0x1C</span></div>
<div class="t" style="left:640.5px;width:31px;text-align:right;top:266.3px;font-family:'Liberation Mono',monospace;font-size:15.5px;color:#555555">39</div>
<div class="t" style="left:699.5px;top:264.5px;font-family:'Liberation Mono',monospace;font-size:15.1px;color:#e6d85a"><span style="font-weight:bold">const</span> <span style="color:#bababa;font-family:'Liberation Sans',sans-serif;font-size:16.45px">极速</span><span style="color:#e6d85a;font-weight:bold"> = </span><span style="color:#f47c6a;font-weight:bold">0x1D</span></div>
<div class="t" style="left:640.5px;width:31px;text-align:right;top:299.7px;font-family:'Liberation Mono',monospace;font-size:15.5px;color:#555555">40</div>
<div class="t" style="left:699.5px;top:297.9px;font-family:'Liberation Mono',monospace;font-size:15.1px;color:#e6d85a"><span style="font-weight:bold">const</span> <span style="color:#bababa;font-family:'Liberation Sans',sans-serif;font-size:16.45px">常规</span><span style="color:#e6d85a;font-weight:bold"> = </span><span style="color:#f47c6a;font-weight:bold">0x1E</span></div>
<div class="t" style="left:640.5px;width:31px;text-align:right;top:333.1px;font-family:'Liberation Mono',monospace;font-size:15.5px;color:#555555">41</div>
<div class="t" style="left:699.5px;top:331.3px;font-family:'Liberation Mono',monospace;font-size:15.1px;color:#e6d85a"><span style="font-weight:bold">const</span> <span style="color:#bababa;font-family:'Liberation Sans',sans-serif;font-size:16.45px">童锁</span><span style="color:#e6d85a;font-weight:bold"> = </span><span style="color:#f47c6a;font-weight:bold">0x1F</span></div>
<div class="t" style="left:640.5px;width:31px;text-align:right;top:366.4px;font-family:'Liberation Mono',monospace;font-size:15.5px;color:#555555">42</div>
<div class="t" style="left:699.5px;top:364.6px;font-family:'Liberation Mono',monospace;font-size:15.1px;color:#e6d85a"><span style="font-weight:bold">const</span> <span style="color:#bababa;font-family:'Liberation Sans',sans-serif;font-size:16.45px">预约开机</span><span style="color:#e6d85a;font-weight:bold"> = </span><span style="color:#f47c6a;font-weight:bold">0x20</span></div>
<div class="t" style="left:640.5px;width:31px;text-align:right;top:399.8px;font-family:'Liberation Mono',monospace;font-size:15.5px;color:#c6c6c6">43</div>
<div class="t" style="left:699.5px;top:398.0px;font-family:'Liberation Mono',monospace;font-size:15.1px;color:#e6d85a"><span style="font-weight:bold">const</span> <span style="color:#bababa;font-family:'Liberation Sans',sans-serif;font-size:16.45px">测试</span><span style="color:#e6d85a;font-weight:bold">=</span><span style="color:#f47c6a;font-weight:bold">0x21</span></div>
<div class="t" style="left:640.5px;width:31px;text-align:right;top:433.2px;font-family:'Liberation Mono',monospace;font-size:15.5px;color:#555555">44</div>
<div class="t" style="left:640.5px;width:31px;text-align:right;top:466.5px;font-family:'Liberation Mono',monospace;font-size:15.5px;color:#555555">45</div>
<div class="t" style="left:699.5px;top:464.7px;font-family:'Liberation Mono',monospace;font-size:15.1px;color:#e6d85a"><span style="font-weight:bold">const</span> <span style="color:#bababa;font-family:'Liberation Sans',sans-serif;font-size:16.45px">左右摇头关</span><span style="color:#e6d85a;font-weight:bold"> = </span><span style="color:#f47c6a;font-weight:bold">0x11</span></div>
<div class="t" style="left:640.5px;width:31px;text-align:right;top:499.9px;font-family:'Liberation Mono',monospace;font-size:15.5px;color:#555555">46</div>
<div class="t" style="left:699.5px;top:498.1px;font-family:'Liberation Mono',monospace;font-size:15.1px;color:#e6d85a"><span style="font-weight:bold">const</span> <span style="color:#bababa;font-family:'Liberation Sans',sans-serif;font-size:16.45px">左右摇头开</span><span style="color:#e6d85a;font-weight:bold"> = </span><span style="color:#f47c6a;font-weight:bold">0x12</span></div>
<div class="t" style="left:640.5px;width:31px;text-align:right;top:533.3px;font-family:'Liberation Mono',monospace;font-size:15.5px;color:#555555">47</div>
<div class="t" style="left:699.5px;top:531.5px;font-family:'Liberation Mono',monospace;font-size:15.1px;color:#e6d85a"><span style="font-weight:bold">const</span> <span style="color:#bababa;font-family:'Liberation Sans',sans-serif;font-size:16.45px">上下摇头关</span><span style="color:#e6d85a;font-weight:bold"> = </span><span style="color:#f47c6a;font-weight:bold">0x21</span></div>
<div class="t" style="left:640.5px;width:31px;text-align:right;top:566.6px;font-family:'Liberation Mono',monospace;font-size:15.5px;color:#555555">48</div>
<div class="t" style="left:699.5px;top:564.8px;font-family:'Liberation Mono',monospace;font-size:15.1px;color:#e6d85a"><span style="font-weight:bold">const</span> <span style="color:#bababa;font-family:'Liberation Sans',sans-serif;font-size:16.45px">上下摇头开</span><span style="color:#e6d85a;font-weight:bold"> = </span><span style="color:#f47c6a;font-weight:bold">0x22</span></div>
<div class="t" style="left:640.5px;width:31px;text-align:right;top:600.0px;font-family:'Liberation Mono',monospace;font-size:15.5px;color:#555555">49</div>
<div class="t" style="left:699.5px;top:598.2px;font-family:'Liberation Mono',monospace;font-size:15.1px;color:#e6d85a"><span style="font-weight:bold">const</span> <span style="color:#bababa;font-family:'Liberation Sans',sans-serif;font-size:16.45px">左右上下摇头关</span><span style="color:#e6d85a;font-weight:bold"> = </span><span style="color:#f47c6a;font-weight:bold">0x31</span></div>
<div class="t" style="left:640.5px;width:31px;text-align:right;top:633.4px;font-family:'Liberation Mono',monospace;font-size:15.5px;color:#555555">50</div>
<div class="t" style="left:699.5px;top:631.6px;font-family:'Liberation Mono',monospace;font-size:15.1px;color:#e6d85a"><span style="font-weight:bold">const</span> <span style="color:#bababa;font-family:'Liberation Sans',sans-serif;font-size:16.45px">左右上下摇头开</span><span style="color:#e6d85a;font-weight:bold"> = </span><span style="color:#f47c6a;font-weight:bold">0x32</span></div>
<div class="t" style="left:640.5px;width:31px;text-align:right;top:666.8px;font-family:'Liberation Mono',monospace;font-size:15.5px;color:#555555">51</div>
<div class="t" style="left:640.5px;width:31px;text-align:right;top:700.1px;font-family:'Liberation Mono',monospace;font-size:15.5px;color:#555555">52</div>
<div class="t" style="left:699.5px;top:698.3px;font-family:'Liberation Mono',monospace;font-size:15.1px;color:#e6d85a"><span style="font-weight:bold">const</span> <span style="color:#bababa;font-family:'Liberation Sans',sans-serif;font-size:16.45px">关闭</span><span style="color:#e6d85a;font-weight:bold"> = </span><span style="color:#f47c6a;font-weight:bold">0x01</span></div>
<div class="a" style="left:1044px;top:54px;width:435.5px;height:33.5px;background:#252526;box-shadow:0 2px 6px rgba(0,0,0,0.55)"></div>
<div class="a" style="left:1044px;top:54px;width:1.5px;height:33.5px;background:#464646"></div>
<svg style="left:1052px;top:65px" width="7" height="12"><path d="M1 1L5.5 6L1 11" fill="none" stroke="#c8c8c8" stroke-width="1.2"/></svg>
<div class="a" style="left:1065.5px;top:58.4px;width:233.5px;height:25px;background:#3c3c3c"></div>
<div class="t" style="left:1068px;top:61.5px;font-size:12.8px;color:#cccccc">CeShiChange</div>
<div class="t" style="left:1234px;top:60.5px;font-size:12px;color:#a8a8a8">Aa</div>
<div class="t" style="left:1256.5px;top:60.5px;font-size:11px;color:#a8a8a8;text-decoration:overline underline">Abl</div>
<div class="a" style="left:1280px;top:73.5px;width:4px;height:4px;background:#a8a8a8"></div>
<div class="t" style="left:1284.5px;top:63.2px;height:20px;line-height:20px;font-size:26px;color:#a8a8a8">*</div>
<div class="t" style="left:1304.5px;top:61.5px;font-size:12.2px;color:#cccccc">1 中的 ?</div>
<svg style="left:1383px;top:64px" width="14" height="15"><path d="M7 14.5V1.5M1.5 7L7 1.5L12.5 7" fill="none" stroke="#d0d0d0" stroke-width="1.3"/></svg>
<svg style="left:1407px;top:64px" width="14" height="15"><path d="M7 0.5V13.5M1.5 8L7 13.5L12.5 8" fill="none" stroke="#d0d0d0" stroke-width="1.3"/></svg>
<svg style="left:1430.5px;top:64px" width="17" height="12"><path d="M0 1H16.5M0 5.5H12M0 10H9" stroke="#7a7a7a" stroke-width="1.2"/></svg>
<svg style="left:1459px;top:66px" width="11.5" height="11.5"><path d="M1 1L10.5 10.5M10.5 1L1 10.5" stroke="#d0d0d0" stroke-width="1.3"/></svg>
<div class="a" style="left:1499px;top:54px;width:2px;height:677px;background:#353535"></div>
<div class="a" style="left:1496px;top:197.5px;width:2.5px;height:2.5px;background:#2a7ab0"></div>
<div class="a" style="left:1496px;top:241px;width:2.5px;height:2.5px;background:#7a8f10"></div>
<div class="a" style="left:1496px;top:297.5px;width:2.5px;height:2.5px;background:#2a7ab0"></div>
<div class="a" style="left:1495.5px;top:656px;width:2.3px;height:27px;background:#6a8c10;border-top:3px solid #2a7ab0"></div>
<div class="a" style="left:659px;top:379.3px;width:292.7px;height:74px;border:3.4px solid #fa1e1e;border-radius:2px"></div>
</body></html>
